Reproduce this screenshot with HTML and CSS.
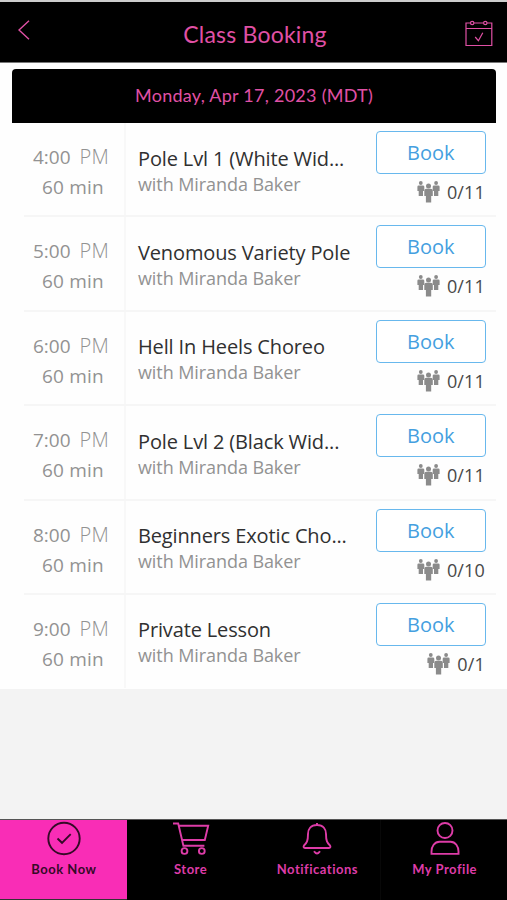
FILE: index.html
```
<!DOCTYPE html>
<html lang="en">
<head>
<meta charset="utf-8">
<title>Class Booking</title>
<link rel="stylesheet" href="styles.css">
</head>
<body>
<svg class="defs" width="0" height="0" aria-hidden="true">
  <symbol id="people" viewBox="0 0 23 22">
    <g id="person"><circle cx="3.8" cy="2" r="1.9"/><path d="M1.700 4.400h4.200q1.400 0 1.400 1.400v4.200H6V15H1.700v-5H.4V5.800q0-1.400 1.300-1.400z"/></g>
    <use href="#person" x="15.300"/>
    <circle cx="11.500" cy="5" r="2.500"/><path d="M9.300 7.800h4.400q2.100 0 2.100 2v5.300h-1.600V21.500H8.900v-6.400H7.300V9.800q0-2 2-2z"/>
  </symbol>
</svg>
<header class="header">
  <svg class="back" width="12" height="20" viewBox="0 0 12 20"><path d="M11 .7 1 10l10 9.300"/></svg>
  <h1 class="title">Class Booking</h1>
  <svg class="calendar" width="28" height="27" viewBox="0 0 28 27"><path d="M5.500 3H1v22.500h25.800V3H22M9 3h9.500M1 8.500h25.800M10.200 17l3.200 3.700 4.400-7.900"/><circle cx="7.200" cy="3" r="1.700"/><circle cx="20.300" cy="3" r="1.700"/></svg>
</header>
<main class="content">
  <h2 class="date">Monday, Apr 17, 2023 (MDT)</h2>
  <ul class="list">
    <li class="row"><div class="when"><p class="time"><span>4:00</span><span class="pm">PM</span></p><p class="length">60 min</p></div><div class="info"><h3 class="name">Pole Lvl 1 (White Wid...</h3><p class="teacher">with Miranda Baker</p></div><div class="action"><button class="book">Book</button><p class="spots"><svg class="people"><use href="#people"/></svg>0/11</p></div></li>
    <li class="row"><div class="when"><p class="time"><span>5:00</span><span class="pm">PM</span></p><p class="length">60 min</p></div><div class="info"><h3 class="name">Venomous Variety Pole</h3><p class="teacher">with Miranda Baker</p></div><div class="action"><button class="book">Book</button><p class="spots"><svg class="people"><use href="#people"/></svg>0/11</p></div></li>
    <li class="row"><div class="when"><p class="time"><span>6:00</span><span class="pm">PM</span></p><p class="length">60 min</p></div><div class="info"><h3 class="name">Hell In Heels Choreo</h3><p class="teacher">with Miranda Baker</p></div><div class="action"><button class="book">Book</button><p class="spots"><svg class="people"><use href="#people"/></svg>0/11</p></div></li>
    <li class="row"><div class="when"><p class="time"><span>7:00</span><span class="pm">PM</span></p><p class="length">60 min</p></div><div class="info"><h3 class="name">Pole Lvl 2 (Black Wid...</h3><p class="teacher">with Miranda Baker</p></div><div class="action"><button class="book">Book</button><p class="spots"><svg class="people"><use href="#people"/></svg>0/11</p></div></li>
    <li class="row"><div class="when"><p class="time"><span>8:00</span><span class="pm">PM</span></p><p class="length">60 min</p></div><div class="info"><h3 class="name">Beginners Exotic Cho...</h3><p class="teacher">with Miranda Baker</p></div><div class="action"><button class="book">Book</button><p class="spots"><svg class="people"><use href="#people"/></svg>0/10</p></div></li>
    <li class="row"><div class="when"><p class="time"><span>9:00</span><span class="pm">PM</span></p><p class="length">60 min</p></div><div class="info"><h3 class="name">Private Lesson</h3><p class="teacher">with Miranda Baker</p></div><div class="action"><button class="book">Book</button><p class="spots"><svg class="people"><use href="#people"/></svg>0/1</p></div></li>
  </ul>
</main>
<nav class="tabs">
  <a class="tab active"><svg width="38" height="36" viewBox="0 0 38 36"><circle cx="19" cy="18.500" r="15.700"/><path d="m12.500 18.500 4.500 4.300 8.700-8.700"/></svg><span>Book Now</span></a>
  <a class="tab"><svg width="38" height="36" viewBox="0 0 38 36"><path d="M1 3.500h5.200l5.200 22.300h21M7.200 5.800h29l-3.400 14.200H10.300"/><circle cx="12.500" cy="31" r="2.900"/><circle cx="29.800" cy="31" r="2.900"/></svg><span>Store</span></a>
  <a class="tab"><svg width="38" height="36" viewBox="0 0 38 36"><path d="M19 3v2M19 5C12.500 5 10 9.500 10 14c0 7-1.200 9-4 11.500-.8 1.200-.4 2.500 1 2.500h24c1.400 0 1.800-1.300 1-2.500-2.800-2.500-4-4.500-4-11.500 0-4.500-2.500-9-9-9zM16 31.200q3 4.500 6 0"/></svg><span>Notifications</span></a>
  <a class="tab profile"><svg width="38" height="36" viewBox="0 0 38 36"><circle cx="19" cy="10.500" r="7.500"/><path d="M5.500 31.500v2.400h27v-2.400c0-5-3-9.700-8-9.700h-11c-5 0-8 4.700-8 9.700z"/></svg><span>My Profile</span></a>
</nav>
</body>
</html>
```
FILE: styles.css
```
* { box-sizing: border-box; margin: 0; padding: 0; }
body { width: 507px; height: 900px; display: flex; flex-direction: column; overflow: hidden; background: #f3f3f3; font-family: "Open Sans", "Noto Sans", sans-serif; }
.defs { position: absolute; }
svg { fill: none; flex: none; }
.header { height: 63px; flex: none; display: flex; justify-content: space-between; align-items: flex-start; padding: 17px 14px 0 18px; background: #000; border-top: 2px solid #ccc; border-bottom: 1px solid #777; color: #e050a5; }
.back, .calendar { stroke: #e050a5; stroke-width: 1.4; }
.back { margin-top: 1px; }
.calendar { stroke-width: 1.2; margin-top: 1px; }
.title { font: 400 23px/30px Lato, sans-serif; letter-spacing: .2px; margin-left: 15px; }
.content { background: #fefefe; padding-top: 6px; height: 625.5px; flex: none; }
.date { height: 54px; margin: 0 11px 0 12px; border-radius: 4px 4px 0 0; background: #000; color: #e050a5; font: 400 18px/53px Lato, sans-serif; text-align: center; letter-spacing: .26px; }
.list { list-style: none; margin: 0 11px 0 24px; }
.row { height: 94.4px; display: grid; grid-template-columns: 101.5px 250px 110.5px; border-bottom: 2px solid #f6f6f6; }
.row:last-child { border-bottom: 0; height: 93.5px; }
.when { border-right: 2px solid #f8f8f8; padding-top: 19px; color: #929292; font-size: 19px; line-height: 30px; }
.time { display: flex; gap: 9px; padding-left: 9px; }
.pm { font-size: 20px; font-weight: 300; letter-spacing: .3px; }
.length { padding-left: 18px; letter-spacing: .2px; }
.info { padding: 20.500px 0 0 12.5px; white-space: nowrap; }
.name { font-size: 20px; line-height: 30px; font-weight: 400; color: #303030; letter-spacing: -.14px; }
.teacher { font-size: 18px; line-height: 21px; color: #929292; letter-spacing: -.08px; }
.action { padding-top: 8px; }
.book { display: block; width: 110.5px; height: 43px; border: 1.5px solid #68b8ed; border-radius: 4px; background: #fff; color: #459fdf; font: 400 20px/39px "Open Sans", sans-serif; }
.spots { display: flex; justify-content: flex-end; gap: 7px; padding: 5px 1px 0 0; font-size: 18px; line-height: 26px; color: #484848; letter-spacing: .15px; }
.people { width: 23px; height: 22px; fill: #8b8b8b; margin-top: 2px; }
.tabs { margin-top: auto; height: 81px; flex: none; display: grid; grid-template-columns: repeat(4, 1fr); background: #000; border-top: 1px solid #555; }
.tab { display: flex; flex-direction: column; align-items: center; padding-left: 1px; color: #de3ca8; font: 700 13px/20px Lato, sans-serif; letter-spacing: .5px; }
.tab svg { stroke: currentColor; stroke-width: 1.9; }
.tab span { margin-top: 3px; }
.active { background: #f92db6; color: #350a27; border-bottom: 1px solid #333; }
.profile { border-left: 1px solid #080808; }
```
